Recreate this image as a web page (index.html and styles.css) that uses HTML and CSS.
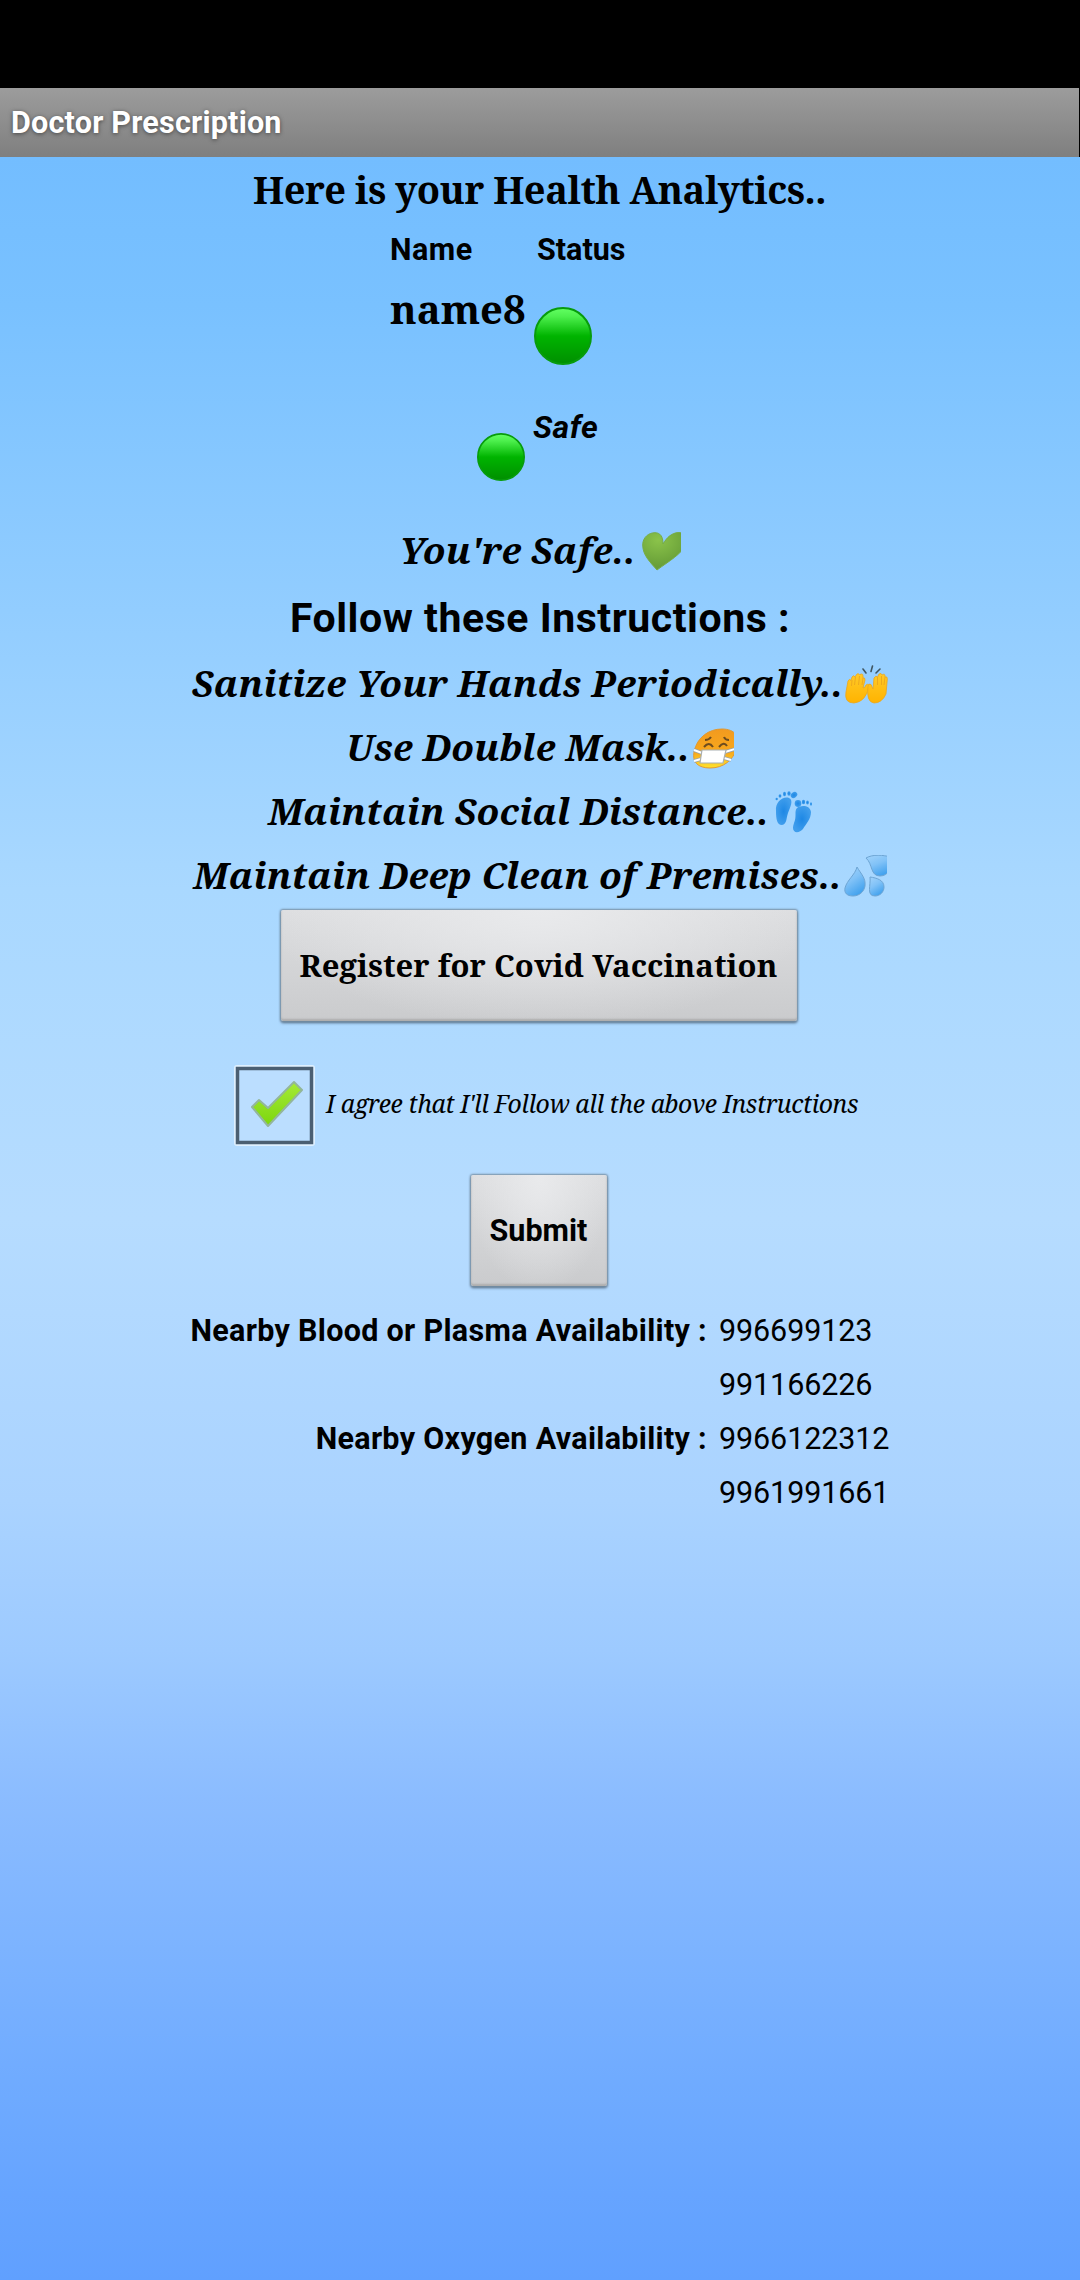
FILE: index.html
```html
<!DOCTYPE html>
<html lang="en">
<head>
<meta charset="utf-8">
<title>Doctor Prescription</title>
<link rel="stylesheet" href="styles.css">
</head>
<body>
<div class="status-bar"></div>
<header class="title-bar"><h1>Doctor Prescription</h1></header>
<main class="screen">
  <svg class="defs" width="0" height="0">
    <defs>
      <linearGradient id="ball" x1="0" y1="0" x2="0" y2="1"><stop offset="0" stop-color="#63ff63"/><stop offset=".15" stop-color="#4df04d"/><stop offset=".5" stop-color="#00b400"/><stop offset="1" stop-color="#008f00"/></linearGradient>
      <radialGradient id="heart" cx=".35" cy=".2" r=".7"><stop offset="0" stop-color="#8bc34a"/><stop offset="1" stop-color="#689f38"/></radialGradient>
      <linearGradient id="hand" x1="0" y1="0" x2="0" y2="1"><stop offset="0" stop-color="#ffca28"/><stop offset="1" stop-color="#ffb300"/></linearGradient>
      <linearGradient id="face" x1="0" y1="0" x2="0" y2="1"><stop offset="0" stop-color="#f29a1f"/><stop offset=".6" stop-color="#f8a81c"/><stop offset="1" stop-color="#ffe32b"/></linearGradient>
      <radialGradient id="foot"><stop offset="0" stop-color="#1e88e5"/><stop offset="1" stop-color="#3f9dec"/></radialGradient>
      <linearGradient id="drop" x1="0" y1="0" x2=".5" y2="1"><stop offset="0" stop-color="#a3d4fb"/><stop offset=".5" stop-color="#81c2f7"/><stop offset="1" stop-color="#45a3ee"/></linearGradient>
      <linearGradient id="tick" x1="0" y1="0" x2="0" y2="1"><stop offset="0" stop-color="#a5ea38"/><stop offset="1" stop-color="#7cd60d"/></linearGradient>
    </defs>
  </svg>

  <h2 class="serif heading">Here is your Health Analytics..</h2>

  <section class="status-grid">
    <span class="label name">Name</span>
    <span class="label indent">Status</span>
    <span class="serif user-name">name8</span>
    <svg class="ball-large" width="58" height="58" viewBox="0 0 58 58"><circle cx="29" cy="29" r="28" fill="url(#ball)" stroke="#089c0c" stroke-width="2"/></svg>
    <svg class="ball-small" width="48" height="48" viewBox="0 0 58 58"><circle cx="29" cy="29" r="28" fill="url(#ball)" stroke="#089c0c" stroke-width="2"/></svg>
    <span class="safe">Safe</span>
  </section>

  <p class="serif tip tip-safe"><span>You're Safe..</span>
    <svg width="39" height="39" viewBox="0 0 39 39"><path d="M15 38C8 30 .7 23 .7 13C.7 5 7 .7 13 .7C18 .8 21 4 21 12C25 5 30 1 36 .6C43 0 46 5 44 12C40 22 27 29 15 38Z" fill="url(#heart)" stroke="#77ac46"/></svg></p>
  <h3 class="follow">Follow these Instructions :</h3>
  <p class="serif tip tip-hands"><span>Sanitize Your Hands Periodically..</span>
    <svg width="43" height="39" viewBox="0 0 43 39"><g stroke="#3f5662" stroke-width="1.600" stroke-linecap="round"><path d="M18 4l3 4M26 6.500l1.500-5.500M31 8l4-4"/></g><g fill="url(#hand)" stroke="#eba61d" stroke-width=".8" stroke-linejoin="round"><path d="M1 27L3 16Q4.500 13 6 15.500L7 12Q8.500 9.500 10 12L11.500 9.500Q13.500 7.500 14.500 10L15 9.500Q18 8 18 11L18 13Q20 12 20 15L18 23Q20 23 21 20Q24 18 24 21Q21 37 9 38Q-1 38 1 27Z"/><path d="M23 21Q23.500 18 26 19.500L28 24L29 13Q31 10 32.500 12L34 9Q36.500 7.500 37 10Q40 8 40 11L40 12Q42.500 11 42.300 14L41 29Q37 38 29 38Q21 37 23 21Z"/></g><path d="M7 15L6.500 21M10.500 12L9.500 20M14.500 11L13.500 20M18 13L17 20M32.500 12V20M36.500 11V20M40 12L39 20" fill="none" stroke="#eba61d" stroke-width=".9"/></svg></p>
  <p class="serif tip tip-mask"><span>Use Double Mask..</span>
    <svg width="41" height="41" viewBox="0 0 41 41"><path d="M1 24C4 9 16 1 29 1C42 1 48 9 44 20C40 32 31 40 17 40C5 40-1 34 1 24Z" fill="url(#face)" stroke="#e19932"/><path d="M12 12Q16 12 18 9M31 9Q32 12 36 12M11 19Q16 13 20 19M26 19Q31 13 34 18" fill="none" stroke="#6d4c1f" stroke-width="2"/><path d="M1 22L9 25M1 33L8 31M32 24L42 21M31 30L38 32" fill="none" stroke="#9aa4aa" stroke-width="3.500"/><path d="M1 22L9 25M1 33L8 31M32 24L42 21M31 30L38 32" fill="none" stroke="#fff" stroke-width="2"/><path d="M9 22H33L30 35H7Z" fill="#fff" stroke="#aaafb1" stroke-width="1.200"/></svg></p>
  <p class="serif tip tip-feet"><span>Maintain Social Distance..</span>
    <svg width="37" height="42" viewBox="0 0 37 42"><g fill="url(#foot)"><path d="M1 20C0 11 8 5 14 7C19 9 15 17 13 22C11 28 12 33 7 34C2 34 1 28 1 20Z"/><ellipse cx="19" cy="4" rx="3.500" ry="2.800" transform="rotate(-35 19 4)"/><ellipse cx="14" cy="2.500" rx="1.700" ry="2.200"/><ellipse cx="9.500" cy="3" rx="1.500" ry="2.200"/><ellipse cx="5" cy="5" rx="1.400" ry="1.800"/><circle cx="1.700" cy="8" r="1.200"/><path d="M19 32C22 25 19 20 22 17C26 14 35 14 36 21C36 28 31 33 28 38C24 43 15 43 19 32Z"/><ellipse cx="23" cy="12.500" rx="3.300" ry="3.400"/><ellipse cx="28.500" cy="11" rx="1.700" ry="2.300"/><ellipse cx="32.500" cy="11.500" rx="1.400" ry="2"/><ellipse cx="36" cy="13" rx="1" ry="1.700"/></g></svg></p>
  <p class="serif tip tip-drops"><span>Maintain Deep Clean of Premises..</span>
    <svg width="43" height="42" viewBox="0 0 43 42"><g fill="url(#drop)" stroke="#6ea5d4" stroke-width="1"><path d="M13 12C17 19 22 23 21 31C20 37 15 41 9 41C3 41 0 38 1 33C3 25 11 20 13 12Z"/><path d="M22 3C29-1 39 0 47 2C48 12 45 21 36 21C26 21 29 9 22 3Z"/><path d="M26 22C33 23 40 25 40 32C40 37 36 41 31 41C22 41 27 30 26 22Z"/></g></svg></p>

  <button class="btn serif register">Register for Covid Vaccination</button>

  <label class="agree">
    <svg width="83" height="83" viewBox="0 0 83 83"><rect x="1" y="1" width="81" height="81" rx="3" fill="#dff0ff"/><rect x="4.500" y="4.500" width="74" height="74" fill="#bbdeff" stroke="#4b5f72" stroke-width="3.500"/><path d="M19 43L26 36L35 44L61 18L69 26L35 62Z" fill="url(#tick)" stroke="#93b69b" stroke-width="2" stroke-linejoin="round"/></svg>
    <span class="serif">I agree that I'll Follow all the above Instructions</span>
  </label>

  <button class="btn submit">Submit</button>

  <section class="contacts">
    <b>Nearby Blood or Plasma Availability :</b><span>996699123</span>
    <b></b><span>991166226</span>
    <b>Nearby Oxygen Availability :</b><span>9966122312</span>
    <b></b><span>9961991661</span>
  </section>
</main>
</body>
</html>
```
FILE: styles.css
```css
* { box-sizing: border-box; margin: 0; padding: 0; }
body { width: 1080px; height: 2280px; display: flex; flex-direction: column; background: #000; color: #000; font-family: Roboto, sans-serif; font-size: 30.5px; overflow: hidden; }
.status-bar { height: 88px; }
.title-bar { width: 1079px; height: 69px; padding-left: 11px; background: linear-gradient(#9c9c9c, #7f7f7f); }
.title-bar h1 { font-size: 30.5px; line-height: 69px; letter-spacing: .22px; color: #fff; text-shadow: 0 1px 4px #444; }
.screen { flex: 1; display: flex; flex-direction: column; align-items: center; background: linear-gradient(#73bdff 0%, #79c1ff 7%, #a9d8ff 34.500%, #b6dcff 50%, #aad3ff 63.300%, #9dcaff 70.300%, #8bbcff 77.300%, #7cb3ff 84.400%, #6eaaff 91.400%, #66a4ff 96%, #60a0ff 100%); }
.defs { position: absolute; }
svg { display: block; flex: none; }
.serif { font-family: "Noto Serif", "Droid Serif", "DejaVu Serif Condensed", "DejaVu Serif", serif; white-space: nowrap; }
.heading { font-size: 38px; line-height: 65px; padding: 0 1px 2px 0; letter-spacing: -.47px; }
.status-grid { align-self: flex-start; margin-left: 390px; display: grid; grid-template-columns: 135px 120px; column-gap: 8px; grid-template-rows: 51px 125px 119px; font-weight: bold; }
.label { line-height: 51px; }
.name { letter-spacing: .5px; }
.indent { padding-left: 4px; }
.user-name { font-size: 40px; line-height: 67px; }
.ball-large { margin: 32px 0 0 1px; }
.ball-small { margin-top: 33px; justify-self: end; }
.safe { font-size: 32px; font-style: italic; line-height: 54px; letter-spacing: .5px; }
.tip { height: 64px; font-size: 37px; line-height: 64px; letter-spacing: .15px; font-weight: bold; font-style: italic; display: flex; align-items: center; gap: 6px; }
.tip span { padding-bottom: 3px; }
.tip-hands { gap: 2px; }
.tip-mask { gap: 3px; }
.tip-drops { gap: 2px; }
.follow { font-size: 41px; line-height: 70px; height: 69px; letter-spacing: .54px; }
.btn { border: 0; border-radius: 2px; color: #000; font-weight: bold; font-size: 30.5px; height: 111px; background: radial-gradient(ellipse at 50% 0, #e9eaec, transparent 75%), linear-gradient(#dddee0, #cacbcd); box-shadow: 0 0 2px 1px #7890a5, 0 2px 3px #526b82, inset 0 -2px 2px #adadad; }
.register { width: 516px; margin: 2px 2px 0 0; padding: 0 1px 2px 0; font-size: 31px; letter-spacing: .08px; }
.submit { width: 136px; margin: 28px 3px 0 0; font-family: Roboto, sans-serif; }
.agree { display: flex; align-items: center; gap: 10px; margin-top: 43px; width: 626px; align-self: flex-start; margin-left: 233px; font-size: 24.8px; font-style: italic; letter-spacing: -.41px; }
.agree span { padding-bottom: 6px; }
.contacts { align-self: flex-start; margin: 18px 0 0 190px; display: grid; grid-template-columns: 517px 200px; column-gap: 12px; grid-auto-rows: 54px; line-height: 54px; }
.contacts span { letter-spacing: -.1px; }
.contacts b { text-align: right; white-space: nowrap; letter-spacing: .31px; }
```
